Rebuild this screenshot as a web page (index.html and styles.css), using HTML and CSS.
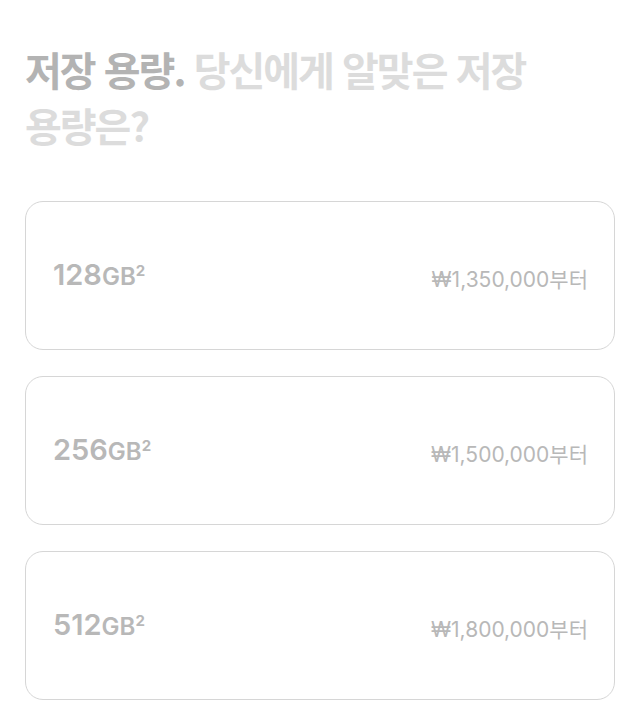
FILE: index.html
```html
<!DOCTYPE html>
<html lang="ko">
<head>
<meta charset="utf-8">
<link rel="stylesheet" href="styles.css">
</head>
<body>
<section class="storage">
  <h2 class="title"><span class="title-strong">저장 용량. </span><span class="title-soft">당신에게 알맞은 저장 용량은?</span></h2>
  <ul class="options">
    <li class="option">
      <span class="capacity">128<span class="unit">GB</span><sup class="note">2</sup></span>
      <span class="price">₩1,350,000부터</span>
    </li>
    <li class="option">
      <span class="capacity">256<span class="unit">GB</span><sup class="note">2</sup></span>
      <span class="price">₩1,500,000부터</span>
    </li>
    <li class="option">
      <span class="capacity">512<span class="unit">GB</span><sup class="note">2</sup></span>
      <span class="price">₩1,800,000부터</span>
    </li>
  </ul>
</section>
</body>
</html>
```
FILE: styles.css
```css
* { box-sizing: border-box; }
html, body { margin: 0; padding: 0; background: #fff; }
body {
  font-family: Inter, "Noto Sans CJK KR", sans-serif;
  width: 634px;
  height: 728px;
  overflow: hidden;
}
.storage {
  padding: 41px 20px 0 25px;
}
.title {
  margin: 0;
  font-family: "Noto Sans CJK KR", sans-serif;
  font-size: 40px;
  font-weight: 700;
  line-height: 56px;
  letter-spacing: -2px;
  max-width: 540px;
}
.title-strong { color: #b3b3b3; }
.title-soft { color: #dcdcdc; }
.options {
  list-style: none;
  margin: 48px 0 0;
  padding: 0;
  display: flex;
  flex-direction: column;
  gap: 26px;
  width: 590px;
}
.option {
  height: 149px;
  border: 1px solid #d6d6d6;
  border-radius: 18px;
  padding: 0 26px 0 27px;
  display: flex;
  align-items: center;
  justify-content: space-between;
}
.capacity {
  font-family: Inter, sans-serif;
  font-size: 29px;
  font-weight: 600;
  color: #b8b8b8;
  margin-top: -2px;
}
.unit {
  font-size: 24px;
}
.note {
  font-size: 15px;
  font-weight: 700;
  vertical-align: 9px;
  line-height: 0;
}
.price {
  font-family: Inter, "Noto Sans CJK KR", sans-serif;
  font-size: 21px;
  color: #b8b8b8;
  margin-top: 4px;
}
```
